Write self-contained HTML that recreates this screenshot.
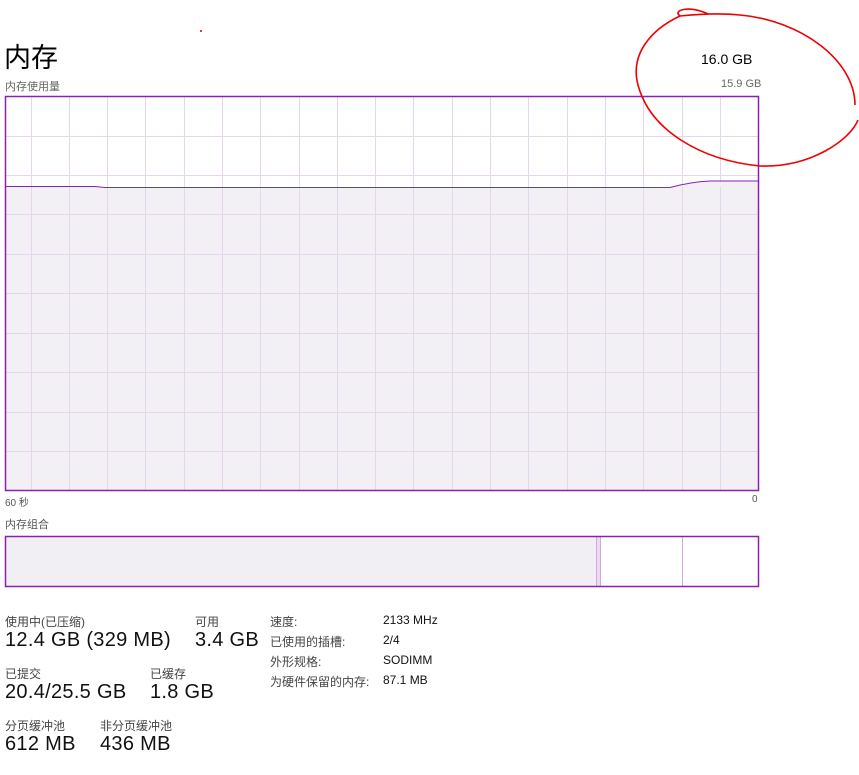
<!DOCTYPE html>
<html><head><meta charset="utf-8"><style>
body{margin:0;width:859px;height:775px;background:#fff;font-family:"Liberation Sans","Noto Sans CJK SC",sans-serif;position:relative;overflow:hidden;color:#000}
.a{position:absolute;white-space:nowrap}
.s{font-size:12px;color:#444}
.v{font-size:20px;color:#111;letter-spacing:0.3px}
</style></head><body>
<div class="a" style="left:4px;top:36px;font-size:27px">内存</div>
<div class="a s" style="left:5px;top:78px;font-size:11px;color:#666">内存使用量</div>
<div class="a" style="left:701px;top:51px;font-size:14px">16.0 GB</div>
<div class="a" style="left:721px;top:78px;font-size:11px;color:#666">15.9 GB</div>
<svg class="a" style="left:0;top:0" width="859" height="775">
<g stroke="#e6d6ec" stroke-width="1">
<path d="M31.5 97V490M69.5 97V490M107.5 97V490M145.5 97V490M184.5 97V490M222.5 97V490M260.5 97V490M299.5 97V490M337.5 97V490M375.5 97V490M413.5 97V490M452.5 97V490M490.5 97V490M528.5 97V490M567.5 97V490M605.5 97V490M643.5 97V490M682.5 97V490M720.5 97V490"/>
<path d="M6 136.5H758M6 175.5H758M6 214.5H758M6 254.5H758M6 293.5H758M6 333.5H758M6 372.5H758M6 412.5H758M6 451.5H758"/>
</g>
<path d="M6 186 H95 L105 187 H670 Q690 182 710 181 H758 V490 H6Z" fill="#f1eef3" fill-opacity="0.9"/>
<g stroke="#e6d6ec"><path d="M31.5 187V490M69.5 187V490M107.5 187V490M145.5 187V490M184.5 187V490M222.5 187V490M260.5 187V490M299.5 187V490M337.5 187V490M375.5 187V490M413.5 187V490M452.5 187V490M490.5 187V490M528.5 187V490M567.5 187V490M605.5 187V490M643.5 187V490M682.5 187V490M720.5 187V490M6 214.5H758M6 254.5H758M6 293.5H758M6 333.5H758M6 372.5H758M6 412.5H758M6 451.5H758"/></g>
<path d="M6 186.5 H95 L105 187.5 H670 Q690 182 710 181 H758" fill="none" stroke="#8b1fb0" stroke-width="1"/>
<path d="M105 187.5 H670" stroke="#555" stroke-width="1"/>
<rect x="5.5" y="96.5" width="753" height="394" fill="none" stroke="#8b1fb0" stroke-width="1.5"/>
<rect x="6" y="537" width="590" height="50" fill="#f2eff4"/>
<rect x="596" y="537" width="5" height="50" fill="#ecdcef"/>
<path d="M596.5 537V587M600.5 537V587M682.5 537V587" stroke="#d3a8df"/>
<rect x="5.5" y="536.5" width="753" height="50" fill="none" stroke="#8b1fb0" stroke-width="1.5"/>
<path d="M708 14 C690 5 672 10 680 16 C650 30 630 55 638 85 C650 130 700 160 760 166 C810 168 850 140 858 120 M855 105 C855 60 800 20 740 15 C720 13 700 14 680 16" fill="none" stroke="#e00" stroke-width="1.6"/>
<rect x="200" y="30" width="2" height="2" fill="#e33"/>
</svg>
<div class="a" style="left:5px;top:494px;font-size:10px;color:#555">60 秒</div>
<div class="a" style="left:752px;top:494px;font-size:10px;color:#555">0</div>
<div class="a" style="left:5px;top:516px;font-size:11px;color:#555">内存组合</div>
<div class="a s" style="left:5px;top:613px">使用中(已压缩)</div>
<div class="a v" style="left:5px;top:629px">12.4 GB (329 MB)</div>
<div class="a s" style="left:195px;top:613px">可用</div>
<div class="a v" style="left:195px;top:629px">3.4 GB</div>
<div class="a s" style="left:5px;top:665px">已提交</div>
<div class="a v" style="left:5px;top:681px">20.4/25.5 GB</div>
<div class="a s" style="left:150px;top:665px">已缓存</div>
<div class="a v" style="left:150px;top:681px">1.8 GB</div>
<div class="a s" style="left:5px;top:717px">分页缓冲池</div>
<div class="a v" style="left:5px;top:733px">612 MB</div>
<div class="a s" style="left:100px;top:717px">非分页缓冲池</div>
<div class="a v" style="left:100px;top:733px">436 MB</div>
<div class="a s" style="left:270px;top:613px">速度:</div>
<div class="a s" style="left:270px;top:633px">已使用的插槽:</div>
<div class="a s" style="left:270px;top:653px">外形规格:</div>
<div class="a s" style="left:270px;top:673px">为硬件保留的内存:</div>
<div class="a s" style="left:383px;top:613px;color:#111">2133 MHz</div>
<div class="a s" style="left:383px;top:633px;color:#111">2/4</div>
<div class="a s" style="left:383px;top:653px;color:#111">SODIMM</div>
<div class="a s" style="left:383px;top:673px;color:#111">87.1 MB</div>
</body></html>
